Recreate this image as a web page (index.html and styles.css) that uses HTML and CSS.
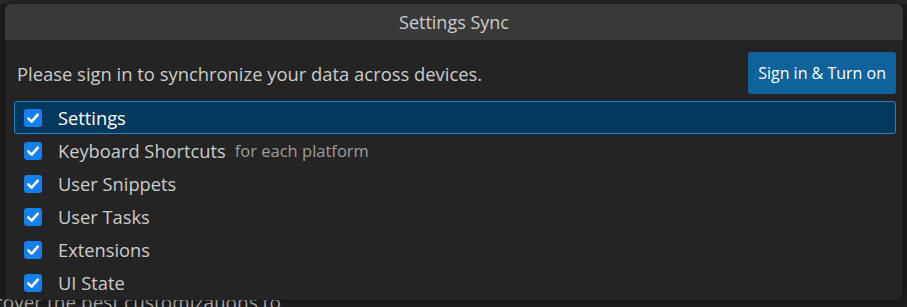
FILE: index.html
```html
<!DOCTYPE html>
<html lang="en">
<head>
    <meta charset="UTF-8">
    <meta name="viewport" content="width=device-width, initial-scale=1.0">
    <title>Settings Sync</title>
    <link rel="stylesheet" href="styles.css">
</head>
<body>
    <div class="editor">
        <div class="editor-top"></div>
        <div class="editor-lines">
            <p class="bg-big">Get started</p>
            <p class="bg-big">Customize</p>
            <p class="bg-text">Discover the best customizations to</p>
        </div>
    </div>

    <div class="quick-input">
        <div class="qi-title">Settings Sync</div>
        <div class="qi-message">
            <span>Please sign in to synchronize your data across devices.</span>
            <button class="qi-button">Sign in &amp; Turn on</button>
        </div>
        <ul class="qi-list">
            <li class="qi-row focused">
                <span class="check"><svg viewBox="0 0 18 18"><path d="M4.2 9.4 L7.6 12.6 L13.8 5.6"/></svg></span>
                <span class="label">Settings</span>
            </li>
            <li class="qi-row">
                <span class="check"><svg viewBox="0 0 18 18"><path d="M4.2 9.4 L7.6 12.6 L13.8 5.6"/></svg></span>
                <span class="label">Keyboard Shortcuts</span>
                <span class="desc">for each platform</span>
            </li>
            <li class="qi-row">
                <span class="check"><svg viewBox="0 0 18 18"><path d="M4.2 9.4 L7.6 12.6 L13.8 5.6"/></svg></span>
                <span class="label">User Snippets</span>
            </li>
            <li class="qi-row">
                <span class="check"><svg viewBox="0 0 18 18"><path d="M4.2 9.4 L7.6 12.6 L13.8 5.6"/></svg></span>
                <span class="label">User Tasks</span>
            </li>
            <li class="qi-row">
                <span class="check"><svg viewBox="0 0 18 18"><path d="M4.2 9.4 L7.6 12.6 L13.8 5.6"/></svg></span>
                <span class="label">Extensions</span>
            </li>
            <li class="qi-row">
                <span class="check"><svg viewBox="0 0 18 18"><path d="M4.2 9.4 L7.6 12.6 L13.8 5.6"/></svg></span>
                <span class="label">UI State</span>
            </li>
        </ul>
    </div>
</body>
</html>
```

FILE: styles.css
```css
html, body {
    margin: 0;
    padding: 0;
    height: 100%;
    overflow: hidden;
}
body {
    background: #1f1f1f;
    font-family: 'Open Sans', 'Noto Sans', Arial, sans-serif;
    color: #cccccc;
    position: relative;
}
.editor-top {
    height: 4px;
    background: #2b2b2b;
}
.editor-lines {
    margin-left: -170px;
    padding-top: 178px;
}
.bg-big {
    margin: 0;
    font-size: 26px;
    line-height: 40px;
    color: #9a9a9a;
}
.bg-text {
    margin: 28px 0 0 136px;
    font-size: 19px;
    line-height: 24px;
    color: #b8b8b8;
}
.quick-input {
    position: absolute;
    left: 5px;
    top: 4px;
    width: 898px;
    height: 296px;
    background: #242424;
    border-radius: 6px;
    overflow: hidden;
    box-shadow: 0 0 8px rgba(0, 0, 0, 0.6);
}
.qi-title {
    height: 36px;
    line-height: 36px;
    background: #393939;
    text-align: center;
    font-size: 18px;
    color: #cccccc;
}
.qi-message {
    display: flex;
    align-items: center;
    justify-content: space-between;
    padding: 12px 7px 0 12px;
    font-size: 18.4px;
    color: #cccccc;
}
.qi-button {
    height: 42px;
    padding: 0 10px;
    background: #0e639c;
    color: #ffffff;
    border: none;
    border-radius: 3px;
    font-family: inherit;
    font-size: 16px;
}
.qi-list {
    list-style: none;
    margin: 7px 7px 0 9px;
    padding: 0;
}
.qi-row {
    display: flex;
    align-items: center;
    height: 33px;
    padding: 0 9px;
    box-sizing: border-box;
    border: 1px solid transparent;
    border-radius: 3px;
}
.qi-row.focused {
    background: #04395e;
    border-color: #2680d0;
}
.check {
    width: 18px;
    height: 18px;
    border-radius: 3px;
    background: #137ff0;
    flex-shrink: 0;
}
.check svg {
    display: block;
    width: 18px;
    height: 18px;
    fill: none;
    stroke: #ffffff;
    stroke-width: 2.6;
    stroke-linecap: round;
    stroke-linejoin: round;
}
.label {
    margin-left: 16px;
    font-size: 18.3px;
    color: #cccccc;
}
.focused .label {
    color: #ffffff;
}
.desc {
    margin-left: 9px;
    font-size: 16.5px;
    color: #9d9d9d;
}
```
